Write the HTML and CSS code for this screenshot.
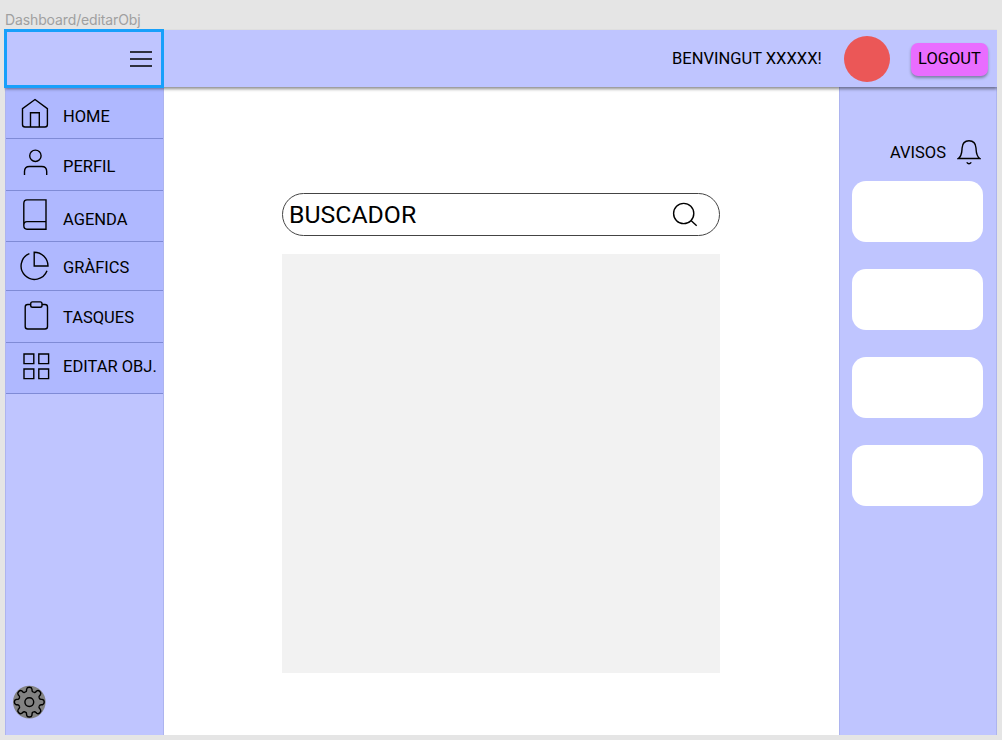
FILE: index.html
```html
<!DOCTYPE html>
<html lang="ca">
<head>
<meta charset="utf-8">
<title>Dashboard/editarObj</title>
<link rel="stylesheet" href="styles.css">
</head>
<body>
<div class="frame-label">Dashboard/editarObj</div>
<div class="frame">
  <header class="header">
    <div class="menu-box">
      <svg class="icon" width="22" height="18" viewBox="0 0 22 18"><path d="M0 2h22M0 9h22M0 16h22"/></svg>
    </div>
    <span class="welcome">BENVINGUT XXXXX!</span>
    <span class="avatar"></span>
    <button class="logout">LOGOUT</button>
  </header>
  <div class="body">
    <aside class="sidebar">
      <nav class="nav">
        <a class="nav-item home"><svg class="icon" width="56" height="50" viewBox="6 88 56 50"><path d="M35 99.5L47.4 108.7V124.5Q47.4 127 45 127H25Q22.5 127 22.5 124.5V108.7ZM30.5 127V112.8H39.3V127"/></svg><span>HOME</span></a>
        <a class="nav-item perfil"><svg class="icon" width="56" height="51" viewBox="6 139 56 51"><circle cx="35.4" cy="155.8" r="5.7"/><path d="M24.5 175V171.5Q24.5 166.5 29.5 166.5H41.7Q46.7 166.5 46.7 171.5V175"/></svg><span>PERFIL</span></a>
        <a class="nav-item agenda"><svg class="icon" width="56" height="50" viewBox="6 191 56 50"><path d="M46 199.9V229.2H27Q23.8 229.2 23.8 225.5V203.5Q23.8 199.9 27 199.9ZM23.8 225.5Q23.8 221.6 27 221.6H46"/></svg><span>AGENDA</span></a>
        <a class="nav-item grafics"><svg class="icon" width="56" height="48" viewBox="6 242 56 48"><path d="M34.2 252.2V266H48A13.8 13.8 0 0 0 34.2 252.2ZM29.4 253.6A13.4 13.4 0 1 0 47 270.8"/></svg><span>GRÀFICS</span></a>
        <a class="nav-item tasques"><svg class="icon" width="56" height="51" viewBox="6 291 56 51"><path d="M30.7 304.5H27.7Q25.2 304.5 25.2 307V326.5Q25.2 329 27.7 329H45Q47.5 329 47.5 326.5V307Q47.5 304.5 45 304.5H42"/><rect x="30.7" y="301.9" width="11.3" height="5.4" rx="1.8"/></svg><span>TASQUES</span></a>
        <a class="nav-item editar"><svg class="icon" width="56" height="50" viewBox="6 343 56 50"><path d="M24 354h9.8v9.6H24zM38.8 354h9.8v9.6h-9.8zM24 369h9.8v9.6H24zM38.8 369h9.8v9.6h-9.8z"/></svg><span>EDITAR OBJ.</span></a>
      </nav>
      <svg class="settings icon" width="34" height="34" viewBox="-17.3 -17.1 34 34">
        <defs><path id="tooth" d="M-4.1-9.9C-1.9-10.8-3-12-2.6-13.2C-2.2-15.5 2.2-15.5 2.6-13.2C3-12 1.9-10.8 4.1-9.9"/></defs>
        <circle class="disc" r="16.3"/>
        <circle r="4.4"/>
        <use href="#tooth"/><use href="#tooth" transform="rotate(45)"/><use href="#tooth" transform="rotate(90)"/><use href="#tooth" transform="rotate(135)"/><use href="#tooth" transform="rotate(180)"/><use href="#tooth" transform="rotate(225)"/><use href="#tooth" transform="rotate(270)"/><use href="#tooth" transform="rotate(315)"/>
      </svg>
    </aside>
    <main class="main">
      <div class="search">
        <span>BUSCADOR</span>
        <svg class="icon" width="26" height="26" viewBox="672 202 26 26"><circle cx="683.7" cy="213.5" r="10.1"/><path d="M691 220.5L696.7 225.7"/></svg>
      </div>
      <section class="content"></section>
    </main>
    <aside class="notices">
      <div class="notices-title"><span>AVISOS</span>
        <svg class="icon" width="24" height="28" viewBox="957 138 24 28"><path d="M958.3 158.5H979.8C976 156 976.3 152 976 148C975.7 143.5 973 140.8 969 140.8S962.4 143.5 962.1 148C961.8 152 962 156 958.3 158.5ZM966.7 162.4Q969 165 971.3 162.4"/></svg>
      </div>
      <div class="card"></div>
      <div class="card"></div>
      <div class="card"></div>
      <div class="card"></div>
    </aside>
  </div>
</div>
</body>
</html>
```
FILE: styles.css
```css
* { box-sizing: border-box; }
body {
  margin: 0;
  height: 740px;
  overflow: hidden;
  padding: 11px 5px 0;
  background: #e5e5e5;
  font: 16.5px/20px Roboto, sans-serif;
  color: #000;
}
.frame-label {
  height: 19px;
  font: 14px/18px Inter, sans-serif;
  letter-spacing: -.12px;
  color: #a0a0a0;
}
.frame {
  width: 992px;
  height: 705px;
  background: #fff;
}
.icon {
  display: block;
  flex: none;
  fill: none;
  stroke: #000;
  stroke-width: 1.4;
}
.header {
  position: relative;
  z-index: 1;
  display: flex;
  align-items: center;
  height: 57px;
  background: #bfc5ff;
  box-shadow: 0 2px 3px rgba(0, 0, 0, .45);
  clip-path: inset(-1px 0 -8px -1px);
}
.menu-box {
  display: flex;
  align-items: center;
  justify-content: flex-end;
  width: 160px;
  height: 59px;
  margin-left: -1px;
  padding-right: 9px;
  border: 3px solid #18a0fb;
}
.welcome {
  width: 150px;
  margin-left: 508px;
  white-space: nowrap;
}
.avatar {
  width: 46px;
  height: 46px;
  margin-left: 22px;
  border-radius: 50%;
  background: #eb5757;
}
.logout {
  width: 77px;
  height: 33px;
  margin: 1px 0 0 21px;
  padding: 0;
  border: 0;
  border-radius: 7px;
  background: #e96dff;
  box-shadow: 0 2px 3px rgba(0, 0, 0, .35);
  font: inherit;
  color: #000;
}
.body {
  display: flex;
  height: 648px;
}
.sidebar, .notices {
  background: #bfc5ff;
  border: solid #adb4ef;
  border-width: 0 1px;
}
.sidebar {
  display: flex;
  flex-direction: column;
  justify-content: space-between;
  width: 159px;
  padding-bottom: 16px;
}
.nav { padding-top: 1px; background: #afb8ff; }
.nav-item {
  display: flex;
  align-items: flex-start;
  border-bottom: 1px solid #7f8bd6;
  white-space: nowrap;
}
.nav-item span { margin-left: 1px; }
.home { height: 51px; }
.home span { padding-top: 19px; }
.perfil { height: 52px; }
.perfil span { padding-top: 18px; }
.agenda { height: 51px; }
.agenda span { padding-top: 19px; }
.grafics { height: 49px; }
.grafics span { padding-top: 16px; }
.tasques { height: 52px; }
.tasques span { padding-top: 17px; }
.editar { height: 51px; }
.editar span { padding-top: 14px; }
.settings { margin-left: 6px; }
.disc { fill: #828282; stroke: none; }
.main { flex: 1; padding: 106px 119px 0 118px; }
.search {
  display: flex;
  align-items: center;
  justify-content: space-between;
  height: 43px;
  padding: 0 21px 0 6px;
  border: 1px solid #444;
  border-radius: 22px;
  font-size: 24.8px;
}
.content {
  height: 419px;
  margin-top: 18px;
  background: #f2f2f2;
}
.notices {
  width: 158px;
  padding: 51px 13px 0 12px;
}
.notices-title {
  display: flex;
  align-items: center;
  justify-content: flex-end;
  gap: 11px;
  height: 28px;
  margin: 0 2px 15px 0;
}
.notices-title span { padding-top: 2px; }
.card {
  height: 61px;
  margin-bottom: 27px;
  border-radius: 14px;
  background: #fff;
}
```
